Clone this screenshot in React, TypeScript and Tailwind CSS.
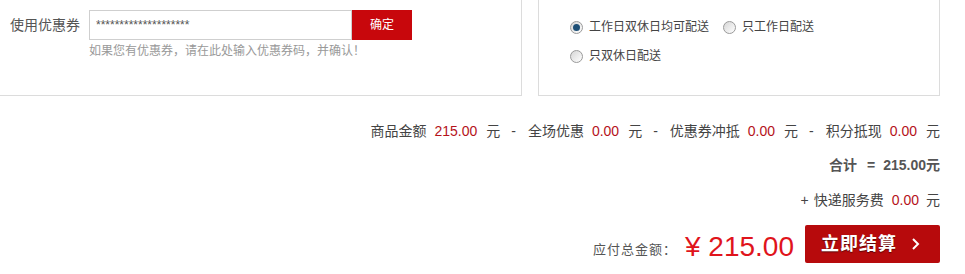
import React, { useState } from "react"

const font = { fontFamily: '"Liberation Sans", "Noto Sans CJK SC", sans-serif' }

const deliveryOptions = [
  { value: "all", label: "工作日双休日均可配送" },
  { value: "workday", label: "只工作日配送" },
  { value: "weekend", label: "只双休日配送" },
]

const summary = [
  { label: "商品金额", amount: "215.00" },
  { label: "全场优惠", amount: "0.00" },
  { label: "优惠券冲抵", amount: "0.00" },
  { label: "积分抵现", amount: "0.00" },
]

function Radio({ checked, label, onClick }: { checked: boolean; label: string; onClick: () => void }) {
  return (
    <label className="flex items-center cursor-pointer" onClick={onClick}>
      <span className="w-[13px] h-[13px] rounded-full border border-[#9a9a9a] bg-gradient-to-br from-[#d6d6d6] to-[#ffffff] flex items-center justify-center">
        {checked && <span className="w-[7px] h-[7px] rounded-full bg-[#1e4f76]" />}
      </span>
      <span className="ml-[6px] text-[12px] text-[#444]">{label}</span>
    </label>
  )
}

export default function App() {
  const [delivery, setDelivery] = useState("all")
  const [coupon, setCoupon] = useState("********************")

  return (
    <div className="w-[965px] h-[274px] bg-white" style={font}>
      <div className="w-[940px]">
        <div className="flex gap-[16px] h-[96px]">
          <div className="w-[522px] border-r border-b border-[#dcdcdc] pl-[10px] pt-[10px]">
            <div className="flex items-center">
              <span className="w-[79px] text-[14px] text-[#555]">使用优惠券</span>
              <input
                value={coupon}
                onChange={(e) => setCoupon(e.target.value)}
                className="w-[263px] h-[30px] border border-[#cfcfcf] px-[6px] text-[12px] text-[#555] outline-none"
              />
              <button className="w-[60px] h-[30px] bg-[#c8070c] text-white text-[12px]">确定</button>
            </div>
            <p className="ml-[79px] mt-[2px] text-[12px] text-[#999]">如果您有优惠券，请在此处输入优惠券码，并确认！</p>
          </div>
          <div className="flex-1 border-l border-r border-b border-[#dcdcdc] pl-[31px] pt-[17px]">
            <div className="flex items-center gap-[14px] h-[20px]">
              <Radio checked={delivery === "all"} label={deliveryOptions[0].label} onClick={() => setDelivery("all")} />
              <Radio checked={delivery === "workday"} label={deliveryOptions[1].label} onClick={() => setDelivery("workday")} />
            </div>
            <div className="flex items-center h-[20px] mt-[9px]">
              <Radio checked={delivery === "weekend"} label={deliveryOptions[2].label} onClick={() => setDelivery("weekend")} />
            </div>
          </div>
        </div>

        <div className="flex flex-col items-end text-[14px] text-[#444]">
          <div className="mt-[25px] h-[20px] flex items-center">
            {summary.map((item, i) => (
              <React.Fragment key={item.label}>
                {i > 0 && <span className="ml-[11px] mr-[12px]">-</span>}
                <span>{item.label}</span>
                <span className="ml-[8px] text-[#b5121b]">{item.amount}</span>
                <span className="ml-[9px]">元</span>
              </React.Fragment>
            ))}
          </div>
          <div className="mt-[14px] h-[20px] flex items-center font-bold text-[#555]">
            <span>合计</span>
            <span className="ml-[10px]">=</span>
            <span className="ml-[8px]">215.00元</span>
          </div>
          <div className="mt-[15px] h-[20px] flex items-center">
            <span>+</span>
            <span className="ml-[5px]">快递服务费</span>
            <span className="ml-[8px] text-[#b5121b]">0.00</span>
            <span className="ml-[7px]">元</span>
          </div>
          <div className="mt-[10px] flex items-center">
            <span className="text-[13px] tracking-[1px] text-[#555] mt-[12px]">应付总金额：</span>
            <span className="text-[28px] text-[#e0141c] mr-[11px] ml-[8px] mt-[6px]">¥ 215.00</span>
            <button className="w-[135px] h-[38px] rounded-[2px] bg-[#b70a0c] text-white flex items-center justify-center gap-[14px] pr-[4px]">
              <span className="text-[18px] font-bold tracking-[1px] [text-shadow:0_1px_1px_rgba(0,0,0,0.5)]">立即结算</span>
              <svg width="9" height="14" viewBox="0 0 9 14" fill="none">
                <path d="M2 2l5 5-5 5" stroke="white" strokeWidth="2" />
              </svg>
            </button>
          </div>
        </div>
      </div>
    </div>
  )
}
